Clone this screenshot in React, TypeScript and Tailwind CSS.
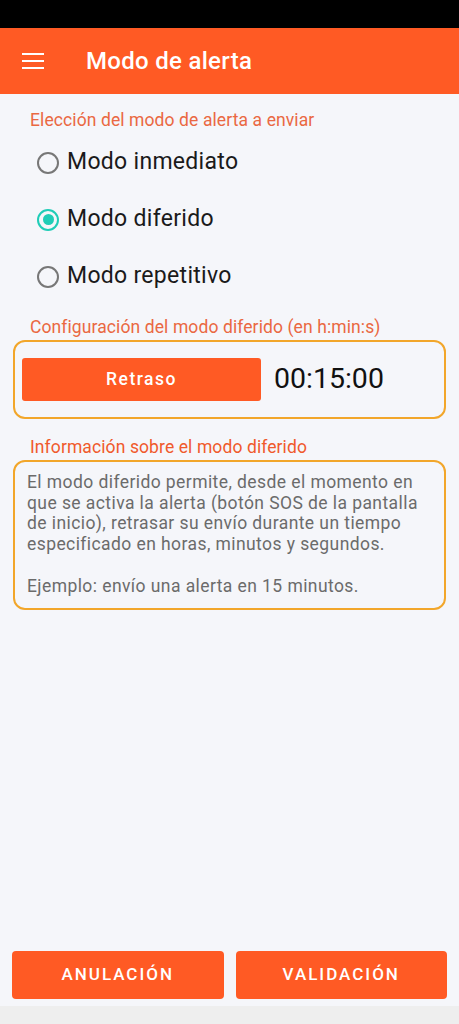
import { useState } from "react";

const modes = ["Modo inmediato", "Modo diferido", "Modo repetitivo"];

function Radio({ checked }: { checked: boolean }) {
  return (
    <span
      className={`flex h-[22px] w-[22px] shrink-0 items-center justify-center rounded-full border-2 ${
        checked ? "border-[#1fcdb7]" : "border-[#777777]"
      }`}
    >
      {checked && <span className="h-[11px] w-[11px] rounded-full bg-[#1fcdb7]" />}
    </span>
  );
}

export default function App() {
  const [mode, setMode] = useState(1);

  return (
    <div className="flex h-[1024px] w-full flex-col bg-[#f5f6fa] font-['Roboto',sans-serif]">
      {/* Status bar */}
      <div className="h-[28px] bg-black" />

      {/* App bar */}
      <div className="flex h-[66px] items-center bg-[#ff5a24] px-[22px]">
        <svg width="22" height="16" viewBox="0 0 22 16" className="shrink-0">
          <rect x="0" y="0" width="22" height="2" fill="white" />
          <rect x="0" y="7" width="22" height="2" fill="white" />
          <rect x="0" y="14" width="22" height="2" fill="white" />
        </svg>
        <h1 className="ml-[42px] text-[24px] font-medium tracking-[0.3px] text-white">
          Modo de alerta
        </h1>
      </div>

      {/* Content */}
      <div className="flex flex-1 flex-col px-[13px] pt-[16px]">
        <p className="px-[17px] text-[17.5px] leading-[20px] tracking-[0.1px] text-[#ea6842]">
          Elección del modo de alerta a enviar
        </p>
        <div className="mt-[4px] flex flex-col">
          {modes.map((m, i) => (
            <button
              key={m}
              type="button"
              onClick={() => setMode(i)}
              className="flex h-[57px] items-center gap-[8px] pl-[24px] text-left"
            >
              <Radio checked={mode === i} />
              <span className="text-[23px] tracking-[0.3px] text-[#1a1a1a]">{m}</span>
            </button>
          ))}
        </div>

        <p className="mt-[12px] px-[17px] text-[17.5px] leading-[20px] tracking-[0.1px] text-[#ea6842]">
          Configuración del modo diferido (en h:min:s)
        </p>
        <div className="mt-[3px] flex items-center gap-[13px] rounded-[12px] border-2 border-[#f2a62a] px-[7px] py-4">
          <button
            type="button"
            className="h-[43px] w-[239px] shrink-0 rounded-[3px] bg-[#ff5a24] text-[17.5px] font-medium tracking-[1.5px] text-white"
          >
            Retraso
          </button>
          <span className="text-[28.5px] text-[#111111]">00:15:00</span>
        </div>

        <p className="mt-[18px] px-[17px] text-[17.5px] leading-[20px] tracking-[0.1px] text-[#f05a2c]">
          Información sobre el modo diferido
        </p>
        <div className="mt-[3px] rounded-[12px] border-2 border-[#f2a62a] px-[12px] pb-[12px] pt-[10px] text-[17.5px] leading-[20.7px] tracking-[0.42px] text-[#6b6b6b]">
          <p>
            El modo diferido permite, desde el momento en que se activa la alerta (botón SOS de
            la pantalla de inicio), retrasar su envío durante un tiempo especificado en horas,
            minutos y segundos.
          </p>
          <p className="mt-[20.7px]">Ejemplo: envío una alerta en 15 minutos.</p>
        </div>

        <div className="-mx-px mt-auto flex gap-[12px] pb-[7px]">
          <button
            type="button"
            className="h-[48px] flex-1 rounded-[4px] bg-[#ff5a24] text-[17px] font-medium tracking-[2px] text-white"
          >
            ANULACIÓN
          </button>
          <button
            type="button"
            className="h-[48px] flex-1 rounded-[4px] bg-[#ff5a24] text-[17px] font-medium tracking-[2px] text-white"
          >
            VALIDACIÓN
          </button>
        </div>
      </div>

      {/* Nav strip */}
      <div className="h-[18px] bg-[#eeeeee]" />
    </div>
  );
}
